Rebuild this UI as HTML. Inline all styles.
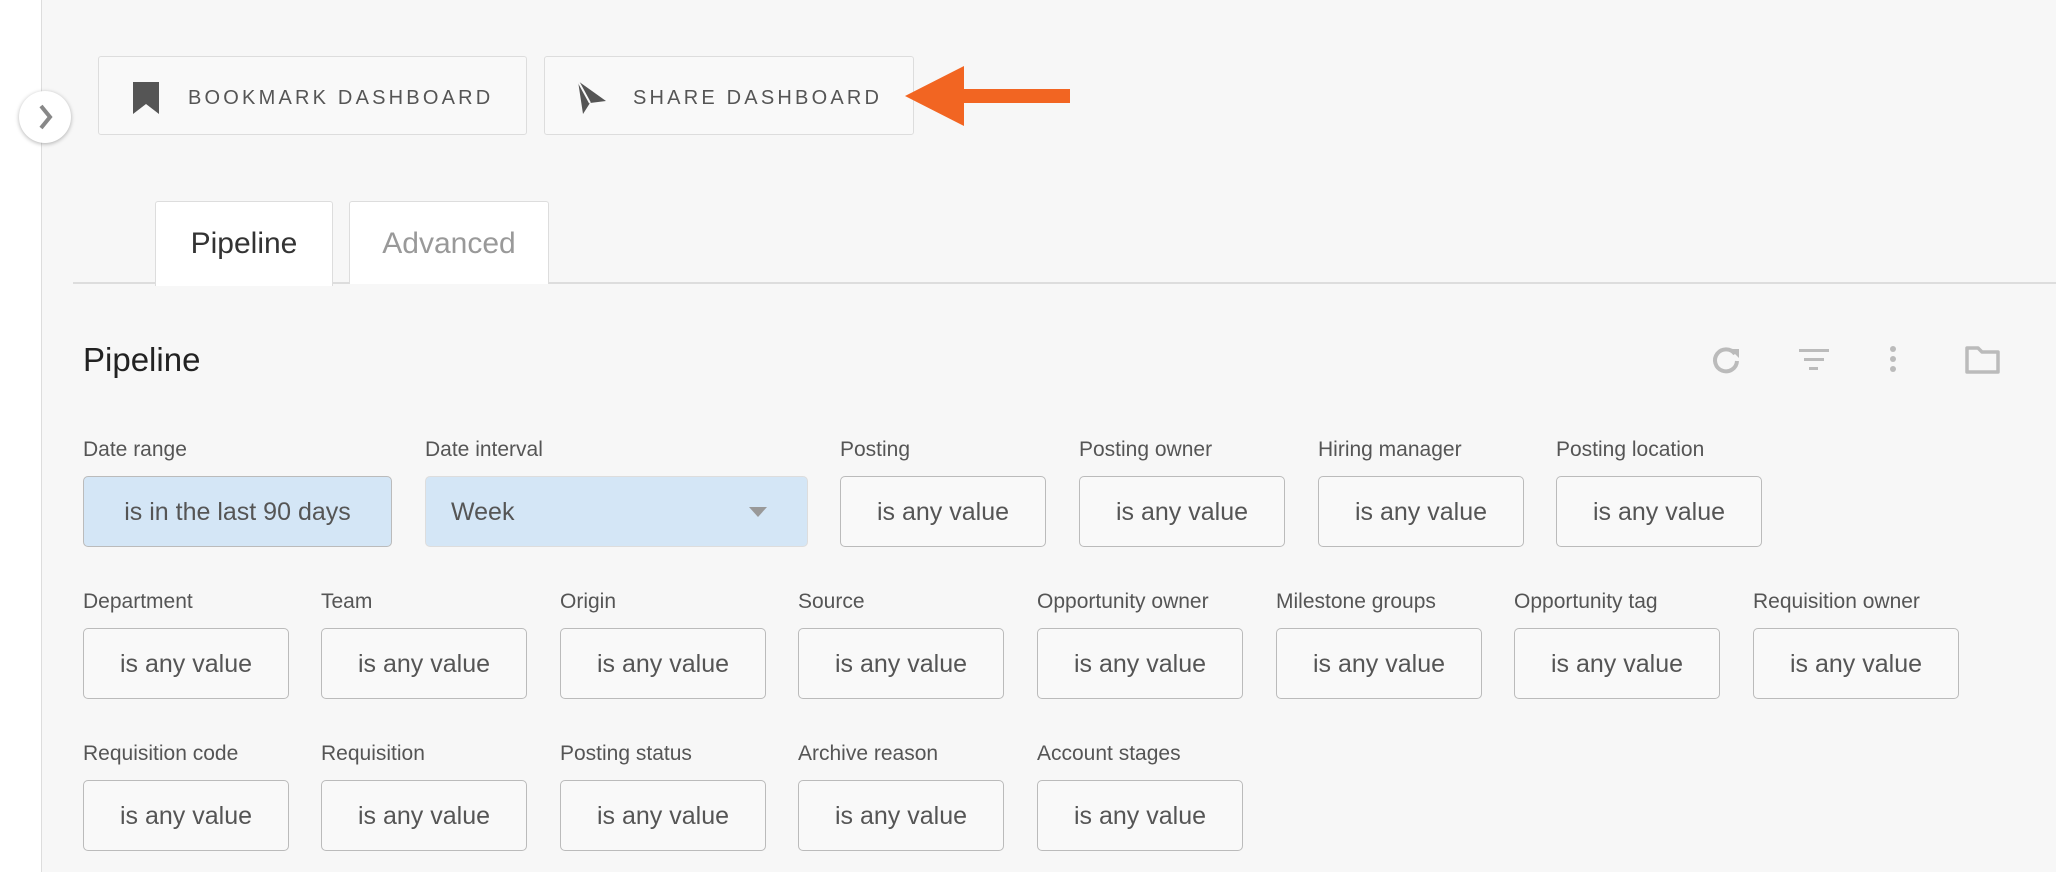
<!DOCTYPE html>
<html><head><meta charset="utf-8"><style>
body{margin:0;width:2056px;height:872px;background:#f7f7f7;position:relative;overflow:hidden;font-family:"Liberation Sans",sans-serif;color:#333}
.side{position:absolute;left:0;top:0;width:41px;height:872px;background:#fff;border-right:1px solid #ddd}
.tog{position:absolute;left:19px;top:91px;width:52px;height:52px;border-radius:50%;background:#fff;box-shadow:0 1px 4px rgba(0,0,0,.3)}
.btn{position:absolute;top:56px;height:77px;background:#f9f9f9;border:1.5px solid #ddd;border-radius:3px;font-size:20px;letter-spacing:3.2px;color:#555;line-height:83px}
.tab{position:absolute;top:201px;height:82px;background:#fff;border:1.5px solid #ddd;border-bottom:none;border-radius:3px 3px 0 0;font-size:30px;text-align:center;line-height:84px}
.lab{position:absolute;font-size:21px;color:#555;margin-top:3px}
.box{position:absolute;height:69px;border:1.5px solid #bbb;border-radius:5px;font-size:25px;color:#555;line-height:71px;text-align:center;background:#f9f9f9;width:204px}
.blue{background:#d4e6f6}
</style></head><body>
<div class="side"></div>
<div class="tog"><svg width="52" height="52" viewBox="0 0 52 52"><path d="M22 15 L31 26 L22 37" stroke="#888" stroke-width="4" fill="none"/></svg></div>
<div class="btn" style="left:98px;width:427px"><svg style="position:absolute;left:34px;top:25px" width="26" height="32" viewBox="0 0 26 32"><path d="M0 0H26V32L13 22L0 32Z" fill="#555"/></svg><span style="position:absolute;left:89px">BOOKMARK DASHBOARD</span></div>
<div class="btn" style="left:544px;width:368px"><svg style="position:absolute;left:31px;top:24px" width="32" height="34" viewBox="0 0 32 34"><path d="M2 0L30 20L14 22L7 33Z" fill="#555"/><path d="M2 0L14 22" stroke="#f9f9f9" stroke-width="2"/></svg><span style="position:absolute;left:88px">SHARE DASHBOARD</span></div>
<svg style="position:absolute;left:900px;top:62px" width="175" height="68" viewBox="0 0 175 68"><path d="M5 34L64 4V27H170V41H64V64Z" fill="#f26522"/></svg>
<div style="position:absolute;left:73px;top:282px;right:0;height:1.5px;background:#ddd"></div>
<div class="tab" style="left:155px;width:176px;color:#333;height:84px">Pipeline</div>
<div class="tab" style="left:349px;width:198px;color:#999">Advanced</div>
<div style="position:absolute;left:83px;top:341px;font-size:33px;color:#222">Pipeline</div>
<svg style="position:absolute;left:1710px;top:344px" width="300" height="32" viewBox="0 0 300 32">
<path d="M25 10A11 11 0 1 0 27 17" stroke="#bbb" stroke-width="4" fill="none"/><path d="M20 5L29 5L29 14Z" fill="#bbb"/>
<rect x="89" y="5" width="30" height="3" fill="#bbb"/><rect x="94" y="14" width="20" height="3" fill="#bbb"/><rect x="99" y="23" width="9" height="3" fill="#bbb"/>
<circle cx="183" cy="5" r="3" fill="#bbb"/><circle cx="183" cy="15" r="3" fill="#bbb"/><circle cx="183" cy="25" r="3" fill="#bbb"/>
<path d="M257 4H268L272 8H288V28H257Z" stroke="#bbb" stroke-width="3.5" fill="none" stroke-linejoin="round"/></svg>

<div class="lab" style="left:83px;top:435px">Date range</div>
<div class="box blue" style="left:83px;top:476px;width:307px">is in the last 90 days</div>
<div class="lab" style="left:425px;top:435px">Date interval</div>
<div class="box blue" style="left:425px;top:476px;width:381px;text-align:left;border-color:#ddd"><span style="padding-left:25px">Week</span><svg style="position:absolute;right:40px;top:30px" width="18" height="10"><path d="M0 0H18L9 10Z" fill="#999"/></svg></div>
<div class="lab" style="left:840px;top:435px">Posting</div><div class="box" style="left:840px;top:476px">is any value</div>
<div class="lab" style="left:1079px;top:435px">Posting owner</div><div class="box" style="left:1079px;top:476px">is any value</div>
<div class="lab" style="left:1318px;top:435px">Hiring manager</div><div class="box" style="left:1318px;top:476px">is any value</div>
<div class="lab" style="left:1556px;top:435px">Posting location</div><div class="box" style="left:1556px;top:476px">is any value</div>

<div class="lab" style="left:83px;top:587px">Department</div><div class="box" style="left:83px;top:628px">is any value</div>
<div class="lab" style="left:321px;top:587px">Team</div><div class="box" style="left:321px;top:628px">is any value</div>
<div class="lab" style="left:560px;top:587px">Origin</div><div class="box" style="left:560px;top:628px">is any value</div>
<div class="lab" style="left:798px;top:587px">Source</div><div class="box" style="left:798px;top:628px">is any value</div>
<div class="lab" style="left:1037px;top:587px">Opportunity owner</div><div class="box" style="left:1037px;top:628px">is any value</div>
<div class="lab" style="left:1276px;top:587px">Milestone groups</div><div class="box" style="left:1276px;top:628px">is any value</div>
<div class="lab" style="left:1514px;top:587px">Opportunity tag</div><div class="box" style="left:1514px;top:628px">is any value</div>
<div class="lab" style="left:1753px;top:587px">Requisition owner</div><div class="box" style="left:1753px;top:628px">is any value</div>

<div class="lab" style="left:83px;top:739px">Requisition code</div><div class="box" style="left:83px;top:780px">is any value</div>
<div class="lab" style="left:321px;top:739px">Requisition</div><div class="box" style="left:321px;top:780px">is any value</div>
<div class="lab" style="left:560px;top:739px">Posting status</div><div class="box" style="left:560px;top:780px">is any value</div>
<div class="lab" style="left:798px;top:739px">Archive reason</div><div class="box" style="left:798px;top:780px">is any value</div>
<div class="lab" style="left:1037px;top:739px">Account stages</div><div class="box" style="left:1037px;top:780px">is any value</div>
</body></html>
